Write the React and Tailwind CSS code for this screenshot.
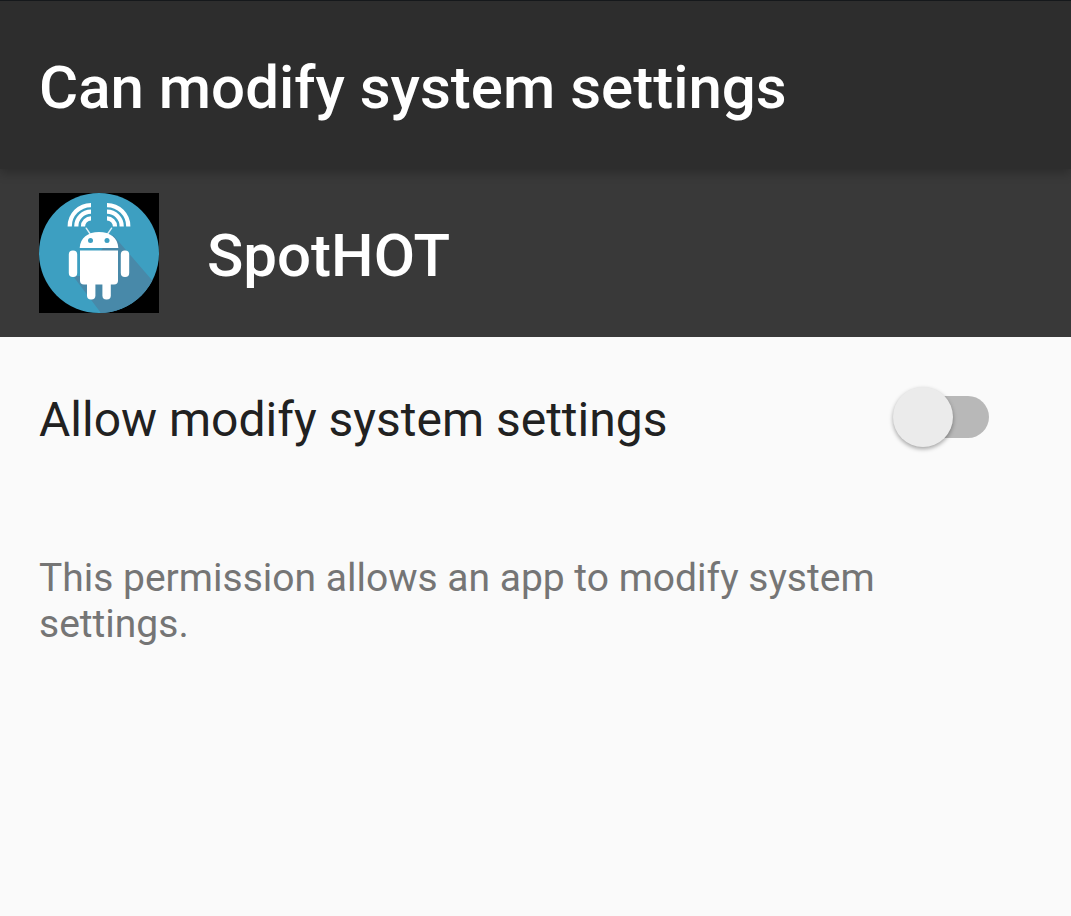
function AppIcon() {
  return (
    <svg viewBox="0 0 120 120" className="size-[120px] shrink-0" role="img" aria-label="SpotHOT icon">
      <defs>
        <clipPath id="disc"><circle cx="60" cy="60" r="60" /></clipPath>
      </defs>
      <rect width="120" height="120" fill="#000" />
      <circle cx="60" cy="60" r="60" fill="#3d9fc1" />
      <path clipPath="url(#disc)" d="M74 42 L112 86 L120 95 V120 H62 L34 83 L42 83 Z" fill="#4889a9" />
      <g fill="#fff">
        <path d="M40.7 55 C41 45 49 39 60 39 S79 45 79.3 55 Z" />
        <path d="M41 57.5 H79 V87.5 a4 4 0 0 1 -4 4 H45 a4 4 0 0 1 -4 -4 Z" />
        <rect x="29.8" y="57.5" width="8.4" height="26.5" rx="4" />
        <rect x="81.8" y="57.5" width="8.4" height="26.5" rx="4" />
        <rect x="48" y="84" width="8.4" height="22.5" rx="4" />
        <rect x="63.4" y="84" width="8.4" height="22.5" rx="4" />
      </g>
      <circle cx="51.5" cy="47.4" r="2.5" fill="#3d9fc1" />
      <circle cx="68" cy="47.4" r="2.5" fill="#3d9fc1" />
      <path d="M47.2 35.2 L51.2 41 M72.6 35.2 L68.6 41" fill="none" stroke="#fff" strokeOpacity="0.85" strokeWidth="1.4" strokeLinecap="round" />
      <g fill="none" stroke="#fff" strokeWidth="4.2">
        <path d="M30.7 33.4 A21.3 21.3 0 0 1 52 12.1 M37.3 33.4 A14.7 14.7 0 0 1 52 18.7 M44 33.4 A8 8 0 0 1 52 25.4" />
        <path d="M89.3 33.4 A21.3 21.3 0 0 0 68 12.1 M82.7 33.4 A14.7 14.7 0 0 0 68 18.7 M76 33.4 A8 8 0 0 0 68 25.4" />
      </g>
    </svg>
  );
}

export default function App() {
  return (
    <div className="min-h-screen bg-[#fafafa] font-['Roboto',sans-serif]">
      <header className="relative border-t border-[#15181b] bg-[#2d2d2d] px-[39px] pt-12 pb-[42px] shadow-[0_4px_10px_rgba(0,0,0,0.25)]">
        <h1 className="text-[60px] leading-[78px] font-medium text-white">Can modify system settings</h1>
      </header>
      <section className="flex items-center gap-12 bg-[#393939] px-[39px] py-6">
        <AppIcon />
        <h2 className="pt-1.5 text-[60px] leading-[78px] font-medium text-white">SpotHOT</h2>
      </section>
      <main>
        <label className="flex h-40 items-center justify-between pr-[82px] pl-[39px]">
          <span className="pt-1.5 text-5xl text-[#212121]">Allow modify system settings</span>
          <span className="relative flex h-16 w-24 items-center">
            <input type="checkbox" role="switch" className="peer absolute inset-0 size-full cursor-pointer opacity-0" />
            <span className="pointer-events-none ml-3 h-[42px] w-[84px] rounded-full bg-[#b8b8b8]" />
            <span className="pointer-events-none absolute top-0.5 left-0 size-[60px] rounded-full bg-[#ebebeb] shadow-[0_2px_4px_rgba(0,0,0,0.35)] peer-checked:left-9" />
          </span>
        </label>
        <p className="max-w-[920px] px-[39px] pt-[58px] text-[39px] leading-[46px] text-[#757575]">
          This permission allows an app to modify system settings.
        </p>
      </main>
    </div>
  );
}
